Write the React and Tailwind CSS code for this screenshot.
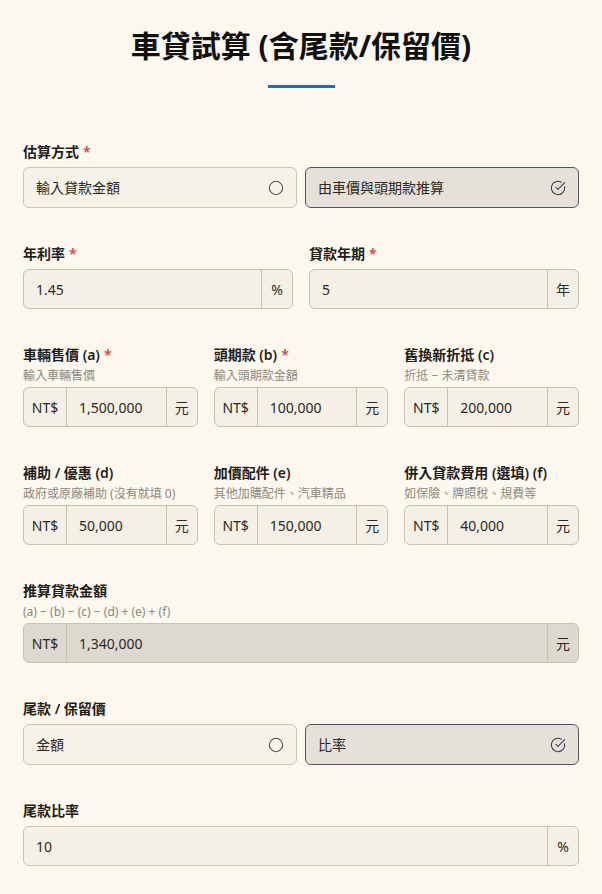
import React, { useState } from 'react'
import { Circle, CircleCheckBig } from 'lucide-react'

const font = { fontFamily: '"Noto Sans", "Noto Sans CJK TC", sans-serif' }

function Label({ text, required, hint }) {
  return (
    <div className={hint ? 'mb-[3px]' : 'mb-[5px]'}>
      <div className="text-[14px] leading-5 font-semibold text-[#1f1d1a]">
        {text}
        {required && <span className="ml-1 text-[#d9453b]">*</span>}
      </div>
      {hint && <div className="mt-[3px] text-[12px] leading-4 text-[#8c877e]">{hint}</div>}
    </div>
  )
}

function RadioPair({ options, value, onChange }) {
  return (
    <div className="grid grid-cols-2 gap-2">
      {options.map((opt) => {
        const active = opt === value
        return (
          <button
            key={opt}
            onClick={() => onChange(opt)}
            className={
              active
                ? 'h-[41px] rounded-md border border-[#4f5667] bg-[#e5e1d9] px-3 flex items-center justify-between text-[14px] text-[#2b2925]'
                : 'h-[41px] rounded-md border border-[#cbc4b7] bg-[#f6f2e8] px-3 flex items-center justify-between text-[14px] text-[#2b2925]'
            }
          >
            <span>{opt}</span>
            {active ? (
              <CircleCheckBig size={16} strokeWidth={1.6} className="text-[#3b4150]" />
            ) : (
              <Circle size={16} strokeWidth={1.6} className="text-[#55524c]" />
            )}
          </button>
        )
      })}
    </div>
  )
}

function Field({ prefix, value, suffix, dim }) {
  return (
    <div
      className={
        dim
          ? 'h-[40px] flex rounded-md border border-[#c8c1b4] bg-[#ddd9cf] overflow-hidden text-[14px] text-[#2b2925]'
          : 'h-[40px] flex rounded-md border border-[#c8c1b4] bg-[#f4f0e6] overflow-hidden text-[14px] text-[#2b2925]'
      }
    >
      {prefix && (
        <div className="w-[43px] shrink-0 flex items-center justify-center border-r border-[#c8c1b4]">{prefix}</div>
      )}
      <div className="flex-1 min-w-0 flex items-center px-3">{value}</div>
      {suffix && (
        <div className="w-[31px] shrink-0 flex items-center justify-center border-l border-[#c8c1b4]">{suffix}</div>
      )}
    </div>
  )
}

export default function App() {
  const [mode, setMode] = useState('由車價與頭期款推算')
  const [balloon, setBalloon] = useState('比率')

  const row1 = [
    { text: '車輛售價 (a)', required: true, hint: '輸入車輛售價', value: '1,500,000' },
    { text: '頭期款 (b)', required: true, hint: '輸入頭期款金額', value: '100,000' },
    { text: '舊換新折抵 (c)', hint: '折抵 − 未清貸款', value: '200,000' },
  ]
  const row2 = [
    { text: '補助 / 優惠 (d)', hint: '政府或原廠補助 (沒有就填 0)', value: '50,000' },
    { text: '加價配件 (e)', hint: '其他加購配件、汽車精品', value: '150,000' },
    { text: '併入貸款費用 (選填) (f)', hint: '如保險、牌照稅、規費等', value: '40,000' },
  ]

  return (
    <div className="min-h-screen bg-[#fcf8ee] px-[23px] pt-7 pb-8" style={font}>
      <h1 className="text-center text-[30px] leading-9 font-bold text-[#111]">車貸試算 (含尾款/保留價)</h1>
      <div className="mx-auto mt-[21px] h-[3px] w-[67px] bg-[#1f6fb2]" />

      <div className="mt-[54px] flex flex-col gap-9">
        <div>
          <Label text="估算方式" required />
          <RadioPair options={['輸入貸款金額', '由車價與頭期款推算']} value={mode} onChange={setMode} />
        </div>

        <div className="grid grid-cols-2 gap-4">
          <div>
            <Label text="年利率" required />
            <Field value="1.45" suffix="%" />
          </div>
          <div>
            <Label text="貸款年期" required />
            <Field value="5" suffix="年" />
          </div>
        </div>

        <div className="grid grid-cols-3 gap-4">
          {row1.map((f) => (
            <div key={f.text}>
              <Label text={f.text} required={f.required} hint={f.hint} />
              <Field prefix="NT$" value={f.value} suffix="元" />
            </div>
          ))}
        </div>

        <div className="grid grid-cols-3 gap-4">
          {row2.map((f) => (
            <div key={f.text}>
              <Label text={f.text} hint={f.hint} />
              <Field prefix="NT$" value={f.value} suffix="元" />
            </div>
          ))}
        </div>

        <div>
          <Label text="推算貸款金額" hint="(a) − (b) − (c) − (d) + (e) + (f)" />
          <Field prefix="NT$" value="1,340,000" suffix="元" dim />
        </div>

        <div>
          <Label text="尾款 / 保留價" />
          <RadioPair options={['金額', '比率']} value={balloon} onChange={setBalloon} />
        </div>

        <div>
          <Label text="尾款比率" />
          <Field value="10" suffix="%" />
        </div>
      </div>
    </div>
  )
}
